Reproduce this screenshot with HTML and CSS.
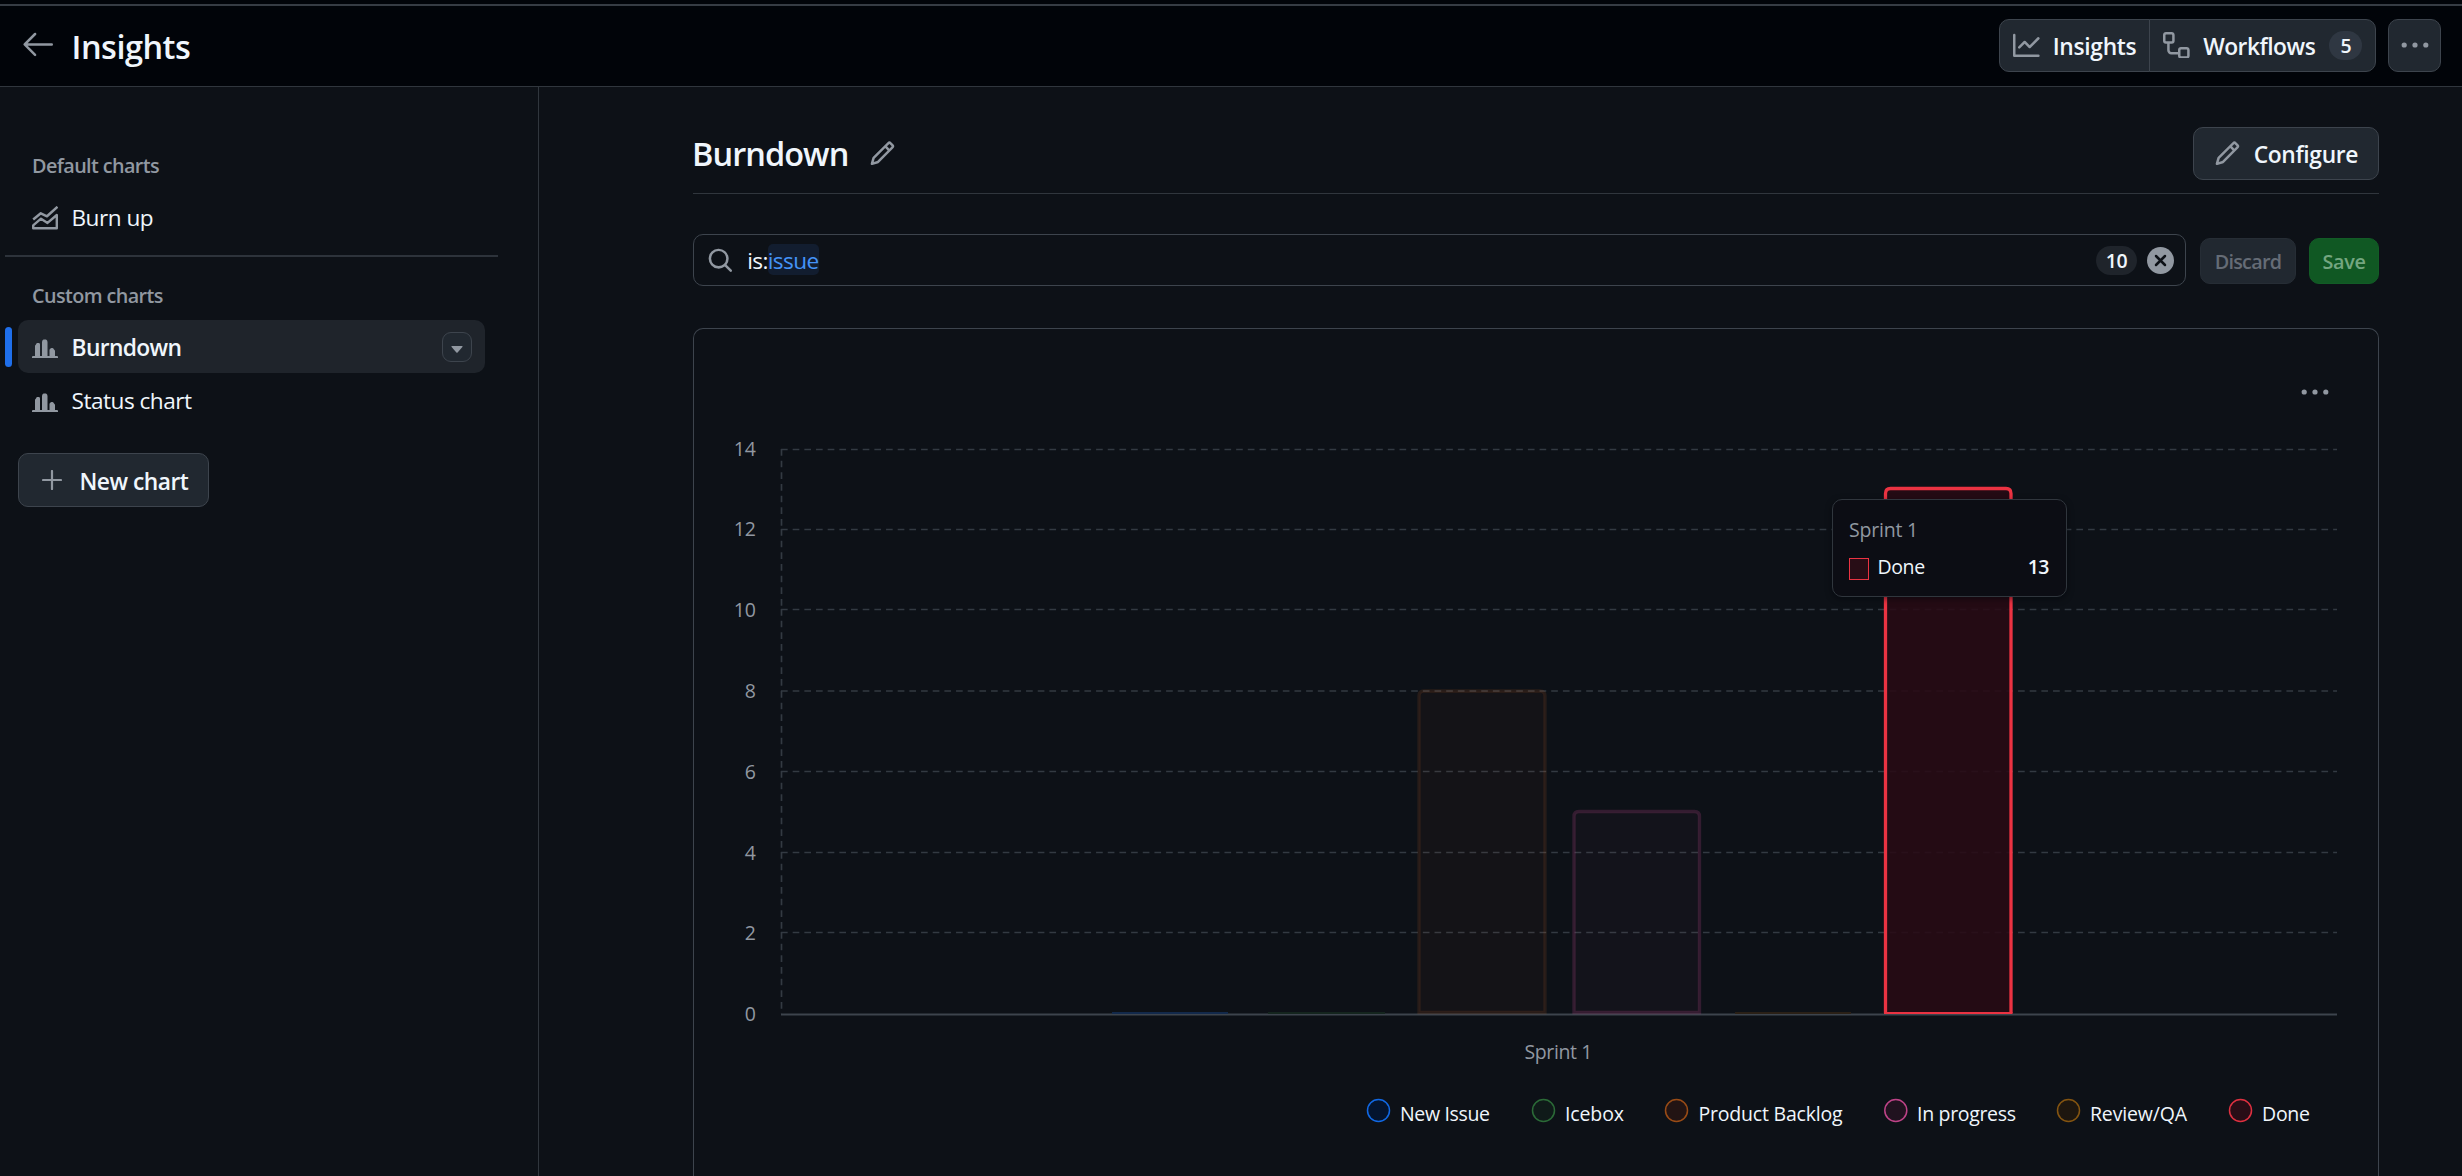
FILE: index.html
```html
<!DOCTYPE html>
<html lang="en">
<head>
<meta charset="utf-8">
<title>Insights</title>
<link rel="stylesheet" href="styles.css">
</head>
<body>
<svg width="0" height="0" class="defs">
  <symbol id="pencil" viewBox="0 0 16 16"><path d="M11.013 1.427a1.75 1.75 0 0 1 2.474 0l1.086 1.086a1.75 1.75 0 0 1 0 2.474l-8.61 8.61c-.21.21-.47.364-.756.445l-3.251.93a.75.75 0 0 1-.927-.928l.929-3.25c.081-.286.235-.547.445-.758l8.61-8.61Zm.176 4.823L9.75 4.81l-6.286 6.287a.253.253 0 0 0-.064.108l-.558 1.953 1.953-.558a.253.253 0 0 0 .108-.064Zm1.238-3.763a.25.25 0 0 0-.354 0L10.811 3.75l1.439 1.44 1.263-1.263a.25.25 0 0 0 0-.354Z"/></symbol>
  <symbol id="bars" viewBox="0 0 26 20"><path d="M1 17h2V7q0-1 1-1.500q0-1 1-1.500h2q1 0 1 1.500V17h2V3q0-2 1.500-2.500h2.500q1.500.5 1.500 2.500v14h2v-6q0-1 1-1.500q.5-.5 1-.5h1q1 .3 1.500 1.500q1 .5 1 1.500v5h2a1 1 0 0 1 1 1v1H0v-1a1 1 0 0 1 1-1Z"/></symbol>
  <symbol id="kebab" viewBox="0 0 28 6"><circle cx="3.2" cy="3" r="2.6"/><circle cx="14" cy="3" r="2.6"/><circle cx="24.8" cy="3" r="2.6"/></symbol>
</svg>

<header class="topbar">
  <svg class="back" viewBox="0 0 24 24"><path d="M10.780 19.030a.750.750 0 0 1-1.060 0l-6.250-6.250a.750.750 0 0 1 0-1.060l6.250-6.250a.749.749 0 0 1 1.275.326.749.749 0 0 1-.215.734L5.810 11.500h14.440a.750.750 0 0 1 0 1.500H5.810l4.970 4.970a.750.750 0 0 1 0 1.060Z"/></svg>
  <h1 class="page-title">Insights</h1>
  <div class="btn-group">
    <button class="seg seg-insights"><svg class="icon" viewBox="0 0 16 16"><path d="M1.500 1.750V13.500h13.750a.75.75 0 0 1 0 1.500H.75a.75.75 0 0 1-.75-.75V1.750a.75.75 0 0 1 1.500 0Zm14.280 2.530-5.250 5.250a.75.75 0 0 1-1.060 0L7 7.060 4.280 9.780a.751.751 0 0 1-1.042-.018.751.751 0 0 1-.018-1.042l3.250-3.250a.75.75 0 0 1 1.060 0L10 7.940l4.720-4.720a.751.751 0 0 1 1.042.018.751.751 0 0 1 .018 1.042Z"/></svg><span>Insights</span></button>
    <button class="seg seg-workflows"><svg class="icon" viewBox="0 0 16 16"><path d="M0 1.750C0 .784.784 0 1.750 0h3.500C6.216 0 7 .784 7 1.750v3.500A1.750 1.750 0 0 1 5.250 7H4v4a1 1 0 0 0 1 1h4v-1.250C9 9.784 9.784 9 10.750 9h3.500c.966 0 1.750.784 1.750 1.750v3.500A1.750 1.750 0 0 1 14.250 16h-3.500A1.750 1.750 0 0 1 9 14.250v-.75H5A2.500 2.500 0 0 1 2.500 11V7h-.75A1.750 1.750 0 0 1 0 5.250Zm1.750-.25a.25.25 0 0 0-.25.25v3.500c0 .138.112.25.25.25h3.500a.25.25 0 0 0 .25-.25v-3.500a.25.25 0 0 0-.25-.25Zm9 9a.25.25 0 0 0-.25.25v3.500c0 .138.112.25.25.25h3.500a.25.25 0 0 0 .25-.25v-3.500a.25.25 0 0 0-.25-.25Z"/></svg><span>Workflows</span><span class="count">5</span></button>
  </div>
  <button class="more"><svg class="dots"><use href="#kebab"/></svg></button>
</header>

<div class="layout">
  <nav class="sidebar">
    <h2 class="nav-label">Default charts</h2>
    <a class="nav-item"><svg class="nav-icon area" viewBox="0 0 26 24"><path d="M1.200 13.500 8.800 7.300 15 10.300 25.500.8" fill="none" stroke="currentColor" stroke-width="2.500" stroke-linejoin="round"/><path d="M1.200 22.300v-3L9 12.700l6.500 4.200L24.800 9v13.300Z" fill="none" stroke="currentColor" stroke-width="2.400" stroke-linejoin="round"/></svg><span>Burn up</span></a>
    <hr class="nav-divider">
    <h2 class="nav-label">Custom charts</h2>
    <a class="nav-item selected"><svg class="nav-icon"><use href="#bars"/></svg><span class="nav-text">Burndown</span><span class="caret-btn"><svg class="caret" viewBox="0 0 12 7"><path d="M.8 0h10.400q.7.300.200 1L6.600 6.500q-.6.500-1.200 0L.6 1Q.1.300.8 0Z"/></svg></span></a>
    <a class="nav-item"><svg class="nav-icon"><use href="#bars"/></svg><span>Status chart</span></a>
    <button class="new-chart"><svg class="plus" viewBox="0 0 20 20"><path d="M10 1v18M1 10h18" stroke="currentColor" stroke-width="2.200" stroke-linecap="round"/></svg><span>New chart</span></button>
  </nav>

  <main class="content">
    <div class="chart-head">
      <h2 class="chart-title">Burndown</h2>
      <svg class="icon edit"><use href="#pencil"/></svg>
      <button class="configure"><svg class="icon"><use href="#pencil"/></svg><span>Configure</span></button>
    </div>
    <div class="filter-row">
      <div class="filter">
        <svg class="icon" viewBox="0 0 16 16"><path d="M10.680 11.740a6 6 0 0 1-7.922-8.982 6 6 0 0 1 8.982 7.922l3.040 3.040a.749.749 0 0 1-.326 1.275.749.749 0 0 1-.734-.215ZM11.500 7a4.499 4.499 0 1 0-8.997 0A4.499 4.499 0 0 0 11.500 7Z"/></svg>
        <span class="query">is:<span class="value">issue</span></span>
        <span class="results">10</span>
        <svg class="clear" viewBox="0 0 27 27"><circle cx="13.500" cy="13.500" r="13.500"/><path d="m9 9 9 9m0-9-9 9" stroke="#0d1117" stroke-width="2.500" stroke-linecap="round"/></svg>
      </div>
      <button class="discard">Discard</button>
      <button class="save">Save</button>
    </div>

    <section class="card">
      <svg class="chart" viewBox="694 329 1684 847">
        <g class="grid">
          <path d="M781 449.500H2337M781 529.500H2337M781 609.500H2337M781 691H2337M781 771.500H2337M781 852.500H2337M781 932.500H2337"/>
          <path d="M781.500 449V529M781.500 529V609M781.500 609V691M781.500 691V771M781.500 771V852M781.500 852V932M781.500 932V1014"/>
        </g>
        <path d="M781 1014.500H2337" stroke="#3d444d" stroke-width="2"/>
        <g stroke-width="2">
          <path d="M1112 1013h116" stroke="#12294b"/>
          <path d="M1268 1013h117" stroke="#14251e"/>
          <path d="M1735 1013h116" stroke="#2a2016"/>
        </g>
        <path d="M1419 1012.500V696q0-5 5-5H1540q5 0 5 5V1012.500Z" fill="#db4a28" fill-opacity=".035"/>
        <path d="M1419 1012.500V696q0-5 5-5H1540q5 0 5 5V1012.500Z" fill="none" stroke="#db6d28" stroke-opacity=".13" stroke-width="3.330"/>
        <path d="M1574 1012.500V816.500q0-5 5-5H1694.500q5 0 5 5V1012.500Z" fill="#db61a2" fill-opacity=".03" stroke="#db4ea0" stroke-opacity=".19" stroke-width="3.330"/>
        <path d="M1885.500 1012V493.500q0-5 5-5H2006q5 0 5 5V1012Z" fill="#280a14" fill-opacity=".88"/>
        <path d="M1885.500 1013V493.500q0-5 5-5H2006q5 0 5 5V1013" fill="none" stroke="#eb3342" stroke-width="3.300"/>
        <path d="M1884 1013H2012.500" stroke="#eb3342" stroke-width="2"/>
        <g class="axis" text-anchor="end">
          <text x="756" y="455.500">14</text><text x="756" y="535.500">12</text><text x="756" y="617">10</text>
          <text x="756" y="697.500">8</text><text x="756" y="778.500">6</text><text x="756" y="859.500">4</text>
          <text x="756" y="939.500">2</text><text x="756" y="1020.500">0</text>
        </g>
        <text class="axis" x="1524.500" y="1059" textLength="68">Sprint 1</text>
        <g stroke-width="1.500">
          <circle cx="1378.500" cy="1110.500" r="11" fill="#04142e" stroke="#1168e3"/>
          <circle cx="1543.500" cy="1110.500" r="11" fill="#0f1a19" stroke="#2b6a37"/>
          <circle cx="1676.500" cy="1110.500" r="11" fill="#221413" stroke="#984b16"/>
          <circle cx="1895.800" cy="1110.500" r="11" fill="#20121f" stroke="#bd4387"/>
          <circle cx="2068.500" cy="1110.500" r="11" fill="#1d160f" stroke="#835411"/>
          <circle cx="2240.500" cy="1110.500" r="11" fill="#280d16" stroke="#dd3040"/>
        </g>
        <g class="legend">
          <text x="1400" y="1121" textLength="90">New Issue</text>
          <text x="1565" y="1121" textLength="59">Icebox</text>
          <text x="1698.500" y="1121" textLength="144">Product Backlog</text>
          <text x="1917" y="1121" textLength="99">In progress</text>
          <text x="2090" y="1121" textLength="97">Review/QA</text>
          <text x="2262" y="1121" textLength="48">Done</text>
        </g>
      </svg>
      <button class="chart-menu"><svg class="dots"><use href="#kebab"/></svg></button>
      <div class="tooltip">
        <div class="tip-title">Sprint 1</div>
        <div class="tip-row"><i class="swatch"></i><span class="tip-name">Done</span><b class="tip-value">13</b></div>
      </div>
    </section>
  </main>
</div>
</body>
</html>
```
FILE: styles.css
```css
* { box-sizing: border-box; }
html, body { height: 100%; }
body {
  margin: 0;
  display: flex;
  flex-direction: column;
  overflow: hidden;
  background: #0d1117;
  color: #f0f6fc;
  font: 400 22.6px "Open Sans", "Noto Sans", sans-serif;
  letter-spacing: -0.5px;
}
h1, h2 { margin: 0; }
svg { display: block; flex: none; fill: currentColor; color: #9198a1; }
.defs { position: absolute; }
button {
  display: flex;
  align-items: center;
  margin: 0;
  padding: 0;
  border: 1px solid #3d444d;
  border-radius: 10px;
  background: #212830;
  color: #f0f6fc;
  font: 600 22.8px "Open Sans", "Noto Sans", sans-serif;
  letter-spacing: -0.5px;
}
.icon { width: 26.67px; height: 26.67px; }
.dots { width: 28px; height: 6px; }

.topbar {
  flex: none;
  display: flex;
  align-items: center;
  height: 87px;
  padding: 0 21px 0 17.5px;
  background: linear-gradient(#363c44, #363c44) 0 4px / 100% 2px no-repeat #010409;
  border-bottom: 1px solid #30363d;
}
.back { width: 40px; height: 40px; margin-top: 2px; }
.page-title {
  margin: 6px auto 0 14px;
  font-size: 32.5px;
  font-weight: 600;
  letter-spacing: -0.5px;
}
.btn-group { display: flex; height: 53px; margin: 5px 12px 0 0; }
.seg-insights {
  width: 151px;
  padding: 0 0 0 13px;
  border-radius: 10px 0 0 10px;
  gap: 13px;
  letter-spacing: -0.3px;
}
.seg-workflows {
  width: 227px;
  margin-left: -1px;
  padding: 0 0 0 13px;
  border-radius: 0 10px 10px 0;
}
.seg span, .configure span, .new-chart span, .nav-text { padding-top: 2px; }
.seg .icon { margin-top: -1px; }
.seg-workflows span:not(.count) { margin: 0 14px 0 13.5px; }
.seg .count {
  width: 33px;
  height: 29px;
  padding: 0;
  border-radius: 15px;
  background: #2f3742;
  font-size: 19.5px;
  line-height: 29px;
  text-align: center;
}
.more { width: 53px; height: 53px; margin-top: 5px; justify-content: center; }
.more .dots { margin-top: -2px; }

.layout { flex: 1; display: flex; min-height: 0; }
.sidebar {
  flex: none;
  width: 539px;
  padding: 59px 0 0 5px;
  border-right: 1px solid #30363d;
}
.nav-label {
  margin: 0 0 5px 27px;
  color: #9198a1;
  font-size: 19.8px;
  font-weight: 600;
  line-height: 40px;
  letter-spacing: -0.6px;
}
.nav-item {
  position: relative;
  display: flex;
  align-items: center;
  width: 467px;
  height: 53px;
  margin-left: 13px;
  padding-left: 14px;
  border-radius: 10px;
}
.nav-icon { width: 26px; height: 20px; margin: 4px 13.5px 0 0; }
.nav-icon.area { height: 24px; margin-top: 0; }
.nav-divider {
  width: 493px;
  height: 2px;
  margin: 11px 0 19px;
  border: 0;
  background: #2d333b;
}
.nav-divider + .nav-label { margin-bottom: 4px; }
.selected {
  margin-bottom: 1px;
  background: #1f242b;
  font-weight: 600;
  font-size: 22.8px;
  letter-spacing: -0.65px;
}
.selected::before {
  content: "";
  position: absolute;
  left: -13px;
  top: 7px;
  width: 7px;
  height: 40px;
  border-radius: 4px;
  background: #1f6feb;
}
.caret-btn {
  display: flex;
  align-items: center;
  justify-content: center;
  width: 30px;
  height: 30px;
  margin: 0 13px 0 auto;
  padding-top: 5px;
  border: 1px solid #3d444d;
  border-radius: 9px;
  background: #212830;
}
.caret { width: 12px; height: 7px; }
.new-chart { width: 191px; height: 54px; margin: 26px 0 0 13px; padding-left: 23px; gap: 17.5px; }
.plus { width: 20px; height: 20px; }

.content {
  flex: 1;
  display: flex;
  flex-direction: column;
  padding: 0 83px 0 154px;
}
.chart-head {
  flex: none;
  display: flex;
  align-items: center;
  height: 107px;
  padding: 40px 0 13px;
  border-bottom: 1px solid #30363d;
}
.chart-title { font-size: 32.5px; font-weight: 600; letter-spacing: -0.95px; line-height: 44px; margin-left: -1px; }
.edit { margin-left: 20.5px; }
.configure { width: 186px; height: 53px; margin-left: auto; padding-left: 19.5px; gap: 13.5px; letter-spacing: -0.35px; }
.filter-row { flex: none; display: flex; align-items: center; margin-top: 40px; height: 52px; }
.filter {
  flex: 1;
  display: flex;
  align-items: center;
  height: 52px;
  padding: 0 11px 0 12.5px;
  border: 1px solid #3d444d;
  border-radius: 10px;
}
.query { margin-left: 14px; white-space: pre; letter-spacing: -0.6px; }
.value { display: inline-block; height: 31px; line-height: 33px; border-radius: 5px; background: #121d2f; color: #4493f8; }
.results {
  width: 41px;
  height: 29px;
  margin: 0 10px 0 auto;
  border-radius: 15px;
  background: #1f242b;
  font-size: 19.5px;
  font-weight: 600;
  line-height: 29px;
  text-align: center;
}
.clear { width: 27px; height: 27px; }
.discard, .save {
  justify-content: center;
  height: 46px;
  margin-top: 2px;
  padding-top: 1px;
  font-size: 19.8px;
  font-weight: 600;
}
.discard { width: 96px; margin-left: 14px; border-color: #262d35; color: #656c76; letter-spacing: -0.75px; }
.save { width: 70px; margin-left: 13px; border-color: #125c26; background: #105823; color: #74a680; letter-spacing: -0.3px; }

.card {
  position: relative;
  flex: 1;
  margin-top: 42px;
  border: 1px solid #3d444d;
  border-bottom: 0;
  border-radius: 10px 10px 0 0;
}
.chart { width: 1684px; height: 847px; letter-spacing: 0; }
.grid { fill: none; stroke: #333a42; stroke-width: 1.67; stroke-dasharray: 6.67 5; }
.axis { fill: #9198a1; font-size: 19.5px; }
.legend { fill: #f0f6fc; font-size: 19.5px; }
.chart-menu { position: absolute; right: 49px; top: 60px; border: 0; background: none; }
.tooltip {
  position: absolute;
  left: 1138px;
  top: 170px;
  width: 235px;
  height: 98px;
  padding: 16px 17px 0 16px;
  border: 1px solid #30363d;
  border-radius: 10px;
  background: #0c0d14;
  box-shadow: 0 2px 6px rgba(1, 4, 9, 0.5);
  font-size: 19.5px;
}
.tip-title { color: #9198a1; font-weight: 500; line-height: 28px; letter-spacing: -0.2px; }
.tip-row { display: flex; align-items: center; margin-top: 9px; line-height: 28px; }
.swatch { width: 20px; height: 22px; margin: 4px 8.5px 0 0; border: 1px solid #eb3342; background: #280d16; }
.tip-name { letter-spacing: -0.4px; }
.tip-value { margin-left: auto; font-weight: 600; }
```
